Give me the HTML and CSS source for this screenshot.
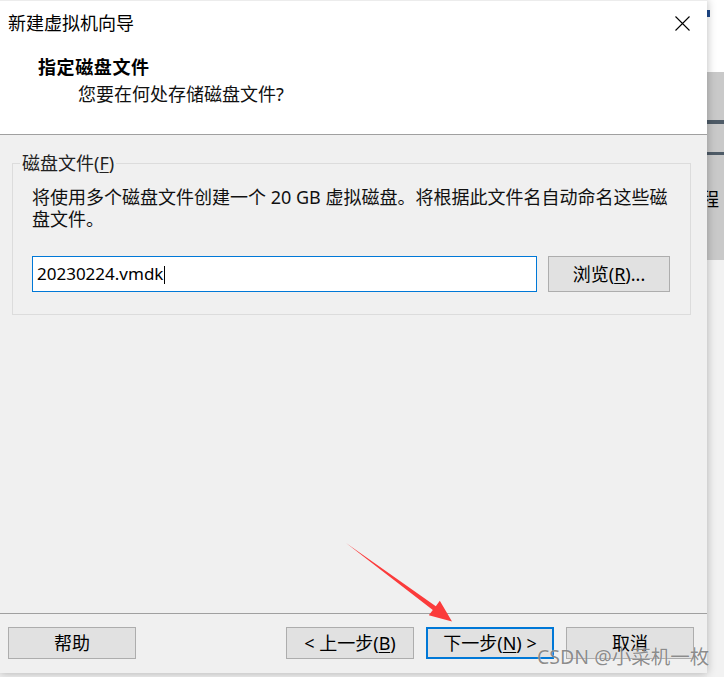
FILE: index.html
```html
<!DOCTYPE html>
<html lang="zh-CN">
<head>
<meta charset="utf-8">
<title>新建虚拟机向导</title>
<link rel="stylesheet" href="styles.css">
</head>
<body>
<div class="screen">
  <div class="dialog">
    <div class="header">
      <div class="titlebar">
        <span class="title">新建虚拟机向导</span>
        <svg class="close" width="15" height="15" viewBox="0 0 15 15"><path d="M0.5 0.5 L14.5 14.5 M14.5 0.5 L0.5 14.5" stroke="#000" stroke-width="1.1" fill="none"/></svg>
      </div>
      <div class="heading">指定磁盘文件</div>
      <div class="subheading">您要在何处存储磁盘文件?</div>
    </div>
    <div class="content">
      <fieldset class="group">
        <legend class="legend">磁盘文件(<u>F</u>)</legend>
        <p class="desc">将使用多个磁盘文件创建一个 20 GB 虚拟磁盘。将根据此文件名自动命名这些磁盘文件。</p>
        <div class="file-row">
          <div class="input">20230224.vmdk<span class="caret"></span></div>
          <div class="btn browse">浏览(<u>R</u>)...</div>
        </div>
      </fieldset>
    </div>
    <div class="footer">
      <div class="btn">帮助</div>
      <div class="spacer"></div>
      <div class="btn">&lt; 上一步(<u>B</u>)</div>
      <div class="btn primary">下一步(<u>N</u>) &gt;</div>
      <div class="btn">取消</div>
    </div>
  </div>
  <div class="backdrop">
    <div class="bd-top"><div class="bd-mark"></div></div>
    <div class="bd-mid">
      <div class="bd-line first"></div>
      <div class="bd-line second"></div>
      <div class="bd-char">程</div>
    </div>
    <div class="bd-bottom"></div>
  </div>
  <svg class="arrow" width="724" height="677" viewBox="0 0 724 677">
    <polygon points="346,543 435.8,606.2 439.8,600.8 452,621.5 428.8,615.2 432.8,610" fill="#fb3b3b"/>
  </svg>
  <div class="watermark">CSDN @小菜机一枚</div>
</div>
</body>
</html>
```
FILE: styles.css
```css
* { box-sizing: border-box; }
html, body { margin: 0; padding: 0; }
body {
  width: 724px;
  height: 677px;
  overflow: hidden;
  background: #f0f0f0;
  font-family: "Noto Sans", "Noto Sans CJK SC", sans-serif;
  font-size: 18px;
  color: #000;
}
.screen {
  position: relative;
  display: flex;
  width: 724px;
  height: 677px;
}
.dialog {
  position: relative;
  z-index: 1;
  width: 707px;
  height: 673px;
  flex: none;
  display: flex;
  flex-direction: column;
  background: #f0f0f0;
  box-shadow: 0 0 9px rgba(0, 0, 0, 0.28);
}
.header {
  height: 135px;
  background: #fff;
  border-top: 1px solid #ececec;
  border-bottom: 1px solid #a0a0a0;
  flex: none;
}
.titlebar {
  height: 42px;
  display: flex;
  align-items: center;
  justify-content: space-between;
  padding: 0 17px 0 8px;
}
.title {
  font-family: "Noto Sans CJK SC", sans-serif;
  font-size: 18px;
  line-height: 24px;
}
.close { display: block; margin-top: 2px; }
.heading {
  margin: 11px 0 0 38px;
  font-family: "Noto Sans CJK SC", sans-serif;
  font-weight: 700;
  font-size: 18px;
  line-height: 24px;
  letter-spacing: 0.6px;
}
.subheading {
  margin: 4px 0 0 78px;
  font-size: 18px;
  line-height: 24px;
  color: #111;
}
.content {
  flex: 1;
  padding: 16px 16px 0 12px;
}
.group {
  margin: 0;
  width: 679px;
  border: 1px solid #dcdcdc;
  padding: 11px 16px 22px 19px;
}
.legend {
  margin-left: -12px;
  padding: 0 2px;
  line-height: 24px;
  color: #222;
}
.desc {
  margin: 0;
  line-height: 22px;
  color: #111;
}
.file-row {
  display: flex;
  gap: 11px;
  margin-top: 26px;
}
.input {
  width: 505px;
  height: 36px;
  border: 1px solid #0078d7;
  background: #fff;
  display: flex;
  align-items: center;
  padding: 0 0 2px 4px;
  font-size: 17px;
}
.caret {
  display: inline-block;
  width: 1px;
  height: 18px;
  background: #000;
  margin-left: 1px;
  margin-top: 4px;
}
.btn {
  width: 128px;
  height: 32px;
  border: 1px solid #adadad;
  background: #e1e1e1;
  display: flex;
  align-items: center;
  justify-content: center;
  font-size: 18px;
  line-height: 22px;
  flex: none;
}
.browse { width: 122px; height: 36px; }
u { text-underline-offset: 2px; text-decoration-thickness: 1px; }
.footer {
  flex: none;
  height: 60px;
  border-top: 1px solid #a0a0a0;
  display: flex;
  gap: 12px;
  padding: 13px 13px 14px 8px;
}
.spacer { flex: 1; }
.btn.primary { border: 2px solid #0078d7; }
.backdrop {
  flex: 1;
  display: flex;
  flex-direction: column;
}
.bd-top {
  height: 72px;
  background: #fff;
  padding-top: 10px;
}
.bd-mark {
  width: 3px;
  height: 7px;
  background: #1f4a8c;
}
.bd-mid {
  height: 188px;
  background: #c9c9c9;
  padding-top: 48px;
}
.bd-line { height: 4px; background: #4e5b67; }
.bd-line.second { margin-top: 28px; height: 3px; }
.bd-char {
  margin: 31px 0 0 -6px;
  font-family: "Noto Sans CJK SC", sans-serif;
  font-size: 18px;
  line-height: 24px;
  white-space: nowrap;
}
.bd-bottom { flex: 1; background: #f2f2f2; }
.arrow {
  position: absolute;
  left: 0;
  top: 0;
  z-index: 2;
  pointer-events: none;
}
.watermark {
  position: absolute;
  z-index: 3;
  left: 537px;
  top: 643px;
  font-size: 19.5px;
  line-height: 28px;
  color: rgba(90, 90, 90, 0.7);
  text-shadow: 0 0 1px rgba(255, 255, 255, 0.9);
  white-space: nowrap;
}
```
